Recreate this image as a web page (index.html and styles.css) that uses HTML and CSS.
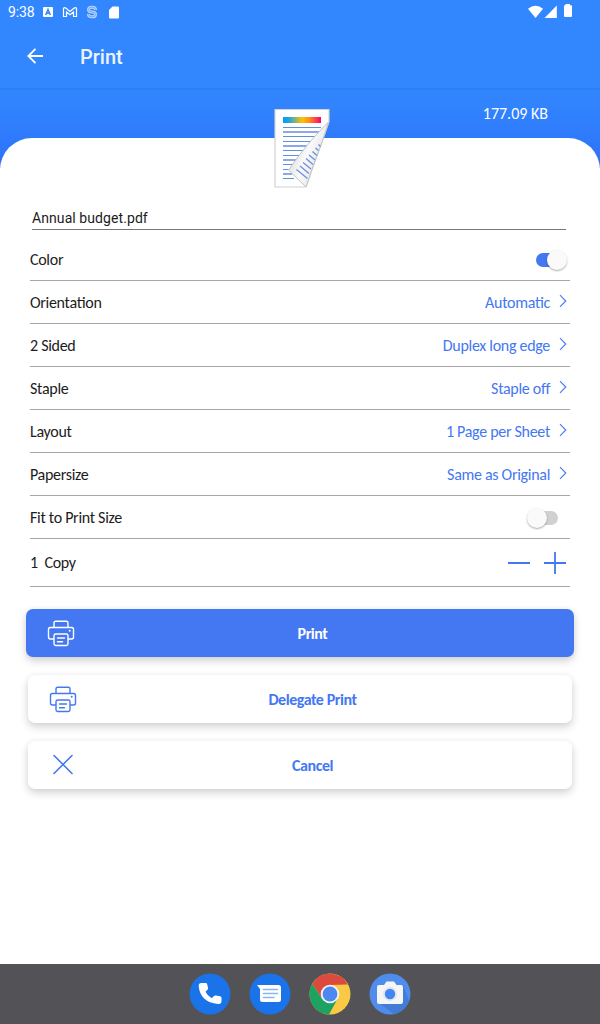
FILE: index.html
```html
<!DOCTYPE html>
<html lang="en">
<head>
<meta charset="utf-8">
<title>Print</title>
<link rel="stylesheet" href="styles.css">
</head>
<body>
<svg class="defs" width="0" height="0">
  <symbol id="chevron" viewBox="0 0 8 14"><path d="M1 1.200 6.800 7 1 12.800" fill="none" stroke="currentColor" stroke-width="1.100"/></symbol>
  <symbol id="printer" viewBox="0 0 28 28"><g fill="none" stroke="currentColor" stroke-width="1.400" stroke-linejoin="round" stroke-linecap="round"><path d="M7 7.500V3Q7 1.300 8.700 1.300H19.300Q21 1.300 21 3V7.500M6.500 19H3.200Q1.500 19 1.500 17V9.500Q1.500 7.500 3.200 7.500H24.800Q26.500 7.500 26.500 9.500V17Q26.500 19 24.800 19H21.500"/><rect x="7" y="14" width="14" height="11.500" rx="1.700"/><path d="M10.500 18H17.500M10.500 21.700H15.500"/></g><circle cx="22.700" cy="10.700" r="1" fill="currentColor"/></symbol>
</svg>
<header class="top">
  <div class="status">
    <span class="time">9:38</span>
    <svg class="notes" viewBox="0 0 78 16" width="78" height="16">
      <rect x="0" y="3" width="10" height="10" rx="1" fill="#fff"/><path d="M2.700 11 5 5.500 7.300 11M3.500 9.300H6.500" fill="none" stroke="#3387fe" stroke-width="1.500"/>
      <path d="M20.500 12.500V4.300Q21.500 3 23 4.200L27 7.400 31 4.200Q32.500 3 33.500 4.300V12.500H30.500V8L27 10.800 23.500 8V12.500Z" fill="none" stroke="#fff" stroke-width="1.200"/>
      <path d="M52.500 6V5.500Q52.500 3.200 49 3.200T45.500 5.600 49 8 52.500 10.400 49 12.800 45.500 10.500V10" fill="none" stroke="#b9d6ff" stroke-width="3"/><path d="M52.500 6V5.500Q52.500 3.200 49 3.200T45.500 5.600 49 8 52.500 10.400 49 12.800 45.500 10.500V10" fill="none" stroke="#5a9eff" stroke-width=".8"/>
      <path d="M69.500 2.500H75Q76 2.500 76 3.500V13.500Q76 14.500 75 14.500H67Q66 14.500 66 13.500V6Z" fill="#fff"/>
    </svg>
    <svg class="signals" viewBox="0 0 46 16" width="46" height="16" fill="#fff"><path d="M0 4.700Q7.500-1.400 15 4.700L7.500 14Z"/><path d="M28.800 1.500V14H16.500Z"/><path d="M37.500 0H42V1.300H43.200Q44 1.300 44 2.200V12Q44 13 43 13H37Q36 13 36 12V2.200Q36 1.300 36.800 1.300H37.500Z"/></svg>
  </div>
  <div class="appbar">
    <svg viewBox="0 0 16 16" width="16" height="16"><path d="M8.500.8 1.300 8 8.500 15.200M1.300 8H16" fill="none" stroke="#fff" stroke-width="1.900"/></svg>
    <h1>Print</h1>
  </div>
</header>
<div class="banner"><span>177.09 KB</span></div>
<main class="sheet">
  <svg class="document" viewBox="0 0 58 82" width="58" height="82">
    <defs>
      <linearGradient id="rainbow"><stop offset="0" stop-color="#009cff"/><stop offset=".15" stop-color="#1ba5df"/><stop offset=".5" stop-color="#ffc107"/><stop offset=".7" stop-color="#ff8c18"/><stop offset="1" stop-color="#ff006e"/></linearGradient>
      <linearGradient id="fold" x1="0" y1="0" x2="1" y2=".6"><stop offset=".25" stop-color="#ddd"/><stop offset=".55" stop-color="#fafafa"/><stop offset="1" stop-color="#ddd"/></linearGradient>
    </defs>
    <path d="M2 1.500H56V14L33 79H2Z" fill="#fff" stroke="#d2d2d2" stroke-width="1.200"/>
    <path d="M10 9H48V15H10Z" fill="url(#rainbow)"/>
    <g fill="#648ce0"><path d="M10 19H48V20H10ZM10 28H43V29H10ZM10 33H39V34H10ZM10 42H31V43H10ZM10 47H27V48H10ZM10 56H20V57H10ZM10 61H17V62H10ZM10 70H21V71H10Z"/><path opacity=".75" d="M10 23H48V25H10ZM10 37H35V39H10ZM10 51H24V53H10ZM10 65H19V67H10Z"/></g>
    <path d="M55.500 14Q34 35 15.500 62L33 79Q38 63 43.500 49T55.500 14Z" fill="url(#fold)" stroke="#c4c4c4" stroke-width="1"/>
    <path d="M23.500 61.500 34.500 70.500M27 58 36 65.500M30 54.500 38 61M33 50.500 40 56.500M36 47 42 52M39.500 43.500 44 47.500M42.500 40 45.500 42.500M45.500 36.500 47.500 38.500" stroke="#6f92df" stroke-width="1.400"/>
  </svg>
  <div class="filename">Annual budget.pdf</div>
  <section class="options">
    <div class="row"><span>Color</span><i class="switch on"></i></div>
    <div class="row"><span>Orientation</span><b>Automatic</b><svg class="chev"><use href="#chevron"/></svg></div>
    <div class="row"><span>2 Sided</span><b>Duplex long edge</b><svg class="chev"><use href="#chevron"/></svg></div>
    <div class="row"><span>Staple</span><b>Staple off</b><svg class="chev"><use href="#chevron"/></svg></div>
    <div class="row"><span>Layout</span><b>1 Page per Sheet</b><svg class="chev"><use href="#chevron"/></svg></div>
    <div class="row"><span>Papersize</span><b>Same as Original</b><svg class="chev"><use href="#chevron"/></svg></div>
    <div class="row"><span>Fit to Print Size</span><i class="switch"></i></div>
    <div class="row copies"><span>1&nbsp; Copy</span><svg class="stepper" viewBox="0 0 60 24" width="60" height="24"><path d="M1 12H23M37 12H59M48 1V23" stroke="currentColor" stroke-width="1.800"/></svg></div>
  </section>
  <div class="actions">
    <button class="primary"><svg><use href="#printer"/></svg><span>Print</span></button>
    <button><svg><use href="#printer"/></svg><span>Delegate Print</span></button>
    <button><svg viewBox="0 0 28 28"><path d="M5 4.500 23 22.500M23 4.500 5 22.500" fill="none" stroke="currentColor" stroke-width="1.600" stroke-linecap="round"/></svg><span>Cancel</span></button>
  </div>
</main>
<nav class="dock">
  <svg viewBox="0 0 42 42"><circle cx="21" cy="21" r="20.500" fill="#1a73e8"/><path d="M12.500 10Q9.500 10 9.700 13Q11 29 29 31Q32.500 31.500 32.500 28V25Q32.500 23.500 31 23.200L26.800 22.500Q25.700 22.300 25 23L22.700 25.300Q18.500 23 16.500 18.800L18.500 16.700Q19.200 16 19 15L18.200 11.200Q18 10 16.800 10Z" fill="#fff"/></svg>
  <svg viewBox="0 0 42 42"><circle cx="21" cy="21" r="20.500" fill="#1a73e8"/><path d="M8 12H29.500Q32 12 32 14.500V26.500Q32 29 29.500 29H13.500Q11 29 11 26.500V16Z" fill="#fff"/><path d="M14.500 16.500H28.500M14.500 20.500H28.500M14.500 24.500H25" stroke="#8ab4f8" stroke-width="1.600" stroke-linecap="round"/></svg>
  <svg viewBox="0 0 42 42"><circle cx="21" cy="21" r="20.500" fill="#fbca45"/><path d="M3.250 10.750A20.500 20.500 0 0 1 38.800 11.500L21 12 13 25.500Z" fill="#dc4a3d"/><path d="M3.250 10.750A20.500 20.500 0 0 0 20 41.500L28.500 26 13 25.500Z" fill="#1da261"/><circle cx="21" cy="21" r="9.300" fill="#f1f1f1"/><circle cx="21" cy="21" r="7.400" fill="#4b88ef"/></svg>
  <svg viewBox="0 0 42 42"><circle cx="21" cy="21" r="20.500" fill="#4f8ceb"/><path d="M34 12 40 28Q36 38 25 41L10 30Z" fill="#427bd8"/><path d="M10 12H15L17.500 8.500H25L27.500 12H32Q34 12 34 14V29Q34 31 32 31H10Q8 31 8 29V14Q8 12 10 12Z" fill="#f5f5f5"/><circle cx="21" cy="21" r="7.200" fill="#e4e7ec"/><circle cx="21" cy="21" r="5.200" fill="#4285f4"/></svg>
</nav>
</body>
</html>
```

FILE: styles.css
```css
* { box-sizing: border-box; }
body { margin: 0; width: 600px; height: 1024px; display: flex; flex-direction: column; overflow: hidden; background: #fff; font: 16px/20px Carlito, Lato, sans-serif; color: #1c1c1c; }
.defs { position: absolute; }
.top { height: 88px; background: #3387fe; color: #fff; font-family: Roboto, sans-serif; }
.status { height: 24px; display: flex; align-items: center; padding: 0 26px 0 8px; }
.time { width: 35px; font-size: 14px; white-space: nowrap; letter-spacing: -.1px; }
.signals { margin-left: auto; margin-top: -1px; }
.appbar { height: 64px; display: flex; align-items: center; gap: 37px; padding: 0 0 1px 27px; }
.appbar h1 { margin: 2px 0 0; font-size: 20px; font-weight: 500; color: #edf3fc; }
.banner { height: 80px; margin-bottom: -30px; display: flex; justify-content: flex-end; padding: 16px 52px 0 0; background: linear-gradient(#2d7bea 0, #3080f2 1px, #3185fc 3px, #3184fe 15px, #2f7afc 50px, #2e70f6 80px); color: #fff; }
.sheet { height: 826px; position: relative; flex: none; background: #fff; border-radius: 32px 32px 0 0; padding: 70px 30px 0; }
.document { position: absolute; left: 273px; top: -30px; }
.filename { height: 22px; margin: 0 4px 8px 2px; border-bottom: 1px solid #777; font-family: Roboto, sans-serif; font-size: 14px; letter-spacing: .08px; }
.row { height: 43px; display: flex; align-items: center; border-bottom: 1px solid #a6a6a6; white-space: nowrap; letter-spacing: -.3px; font-feature-settings: "liga", "clig"; }
.row span, .row b { padding-top: 1px; }
.row b { margin-left: auto; margin-right: 9px; font-weight: 400; color: #4477f2; }
.chev { width: 8px; height: 14px; margin: 0 3px 2px 0; color: #4477f2; }
.copies { height: 48px; }
.copies span { padding-top: 0; }
.stepper { margin: 0 3px 0 auto; color: #4477f2; }
.switch { position: relative; width: 32px; height: 20px; margin-left: auto; margin-right: 11px; margin-top: 1px; }
.switch.on { margin-right: 3px; }
.switch::before { content: ""; position: absolute; inset: 3px 1px 3px 3px; border-radius: 7px; background: #d1d1d1; }
.switch::after { content: ""; position: absolute; left: 0; top: 0; width: 20px; height: 20px; border-radius: 50%; background: #fafafa; box-shadow: 0 1px 2px #0005; }
.switch.on::before { background: #4477f2; inset: 3px 3px 3px 1px; }
.switch.on::after { left: 12px; }
.actions { display: flex; flex-direction: column; gap: 18px; margin: 22px -2px 0; }
.actions button { height: 48px; border: 0; border-radius: 7px; background: #fff; padding: 0 24px 0 21px; display: flex; align-items: center; color: #4477f2; font: 700 16px/20px Carlito, Lato, sans-serif; letter-spacing: -.45px; box-shadow: 0 4px 9px #0000002b, 0 0 6px #0000000b; }
.actions button span { flex: 1; text-align: center; padding-top: 1px; }
.actions svg { width: 28px; height: 28px; margin-top: 1px; }
.actions button:last-child svg { margin-top: 0; }
.actions .primary { margin: 0 -2px; color: #fff; background: #4477f2; }
.dock { height: 60px; flex: none; background: #535256; display: flex; justify-content: center; align-items: center; gap: 18px; }
.dock svg { width: 42px; height: 42px; }
```
